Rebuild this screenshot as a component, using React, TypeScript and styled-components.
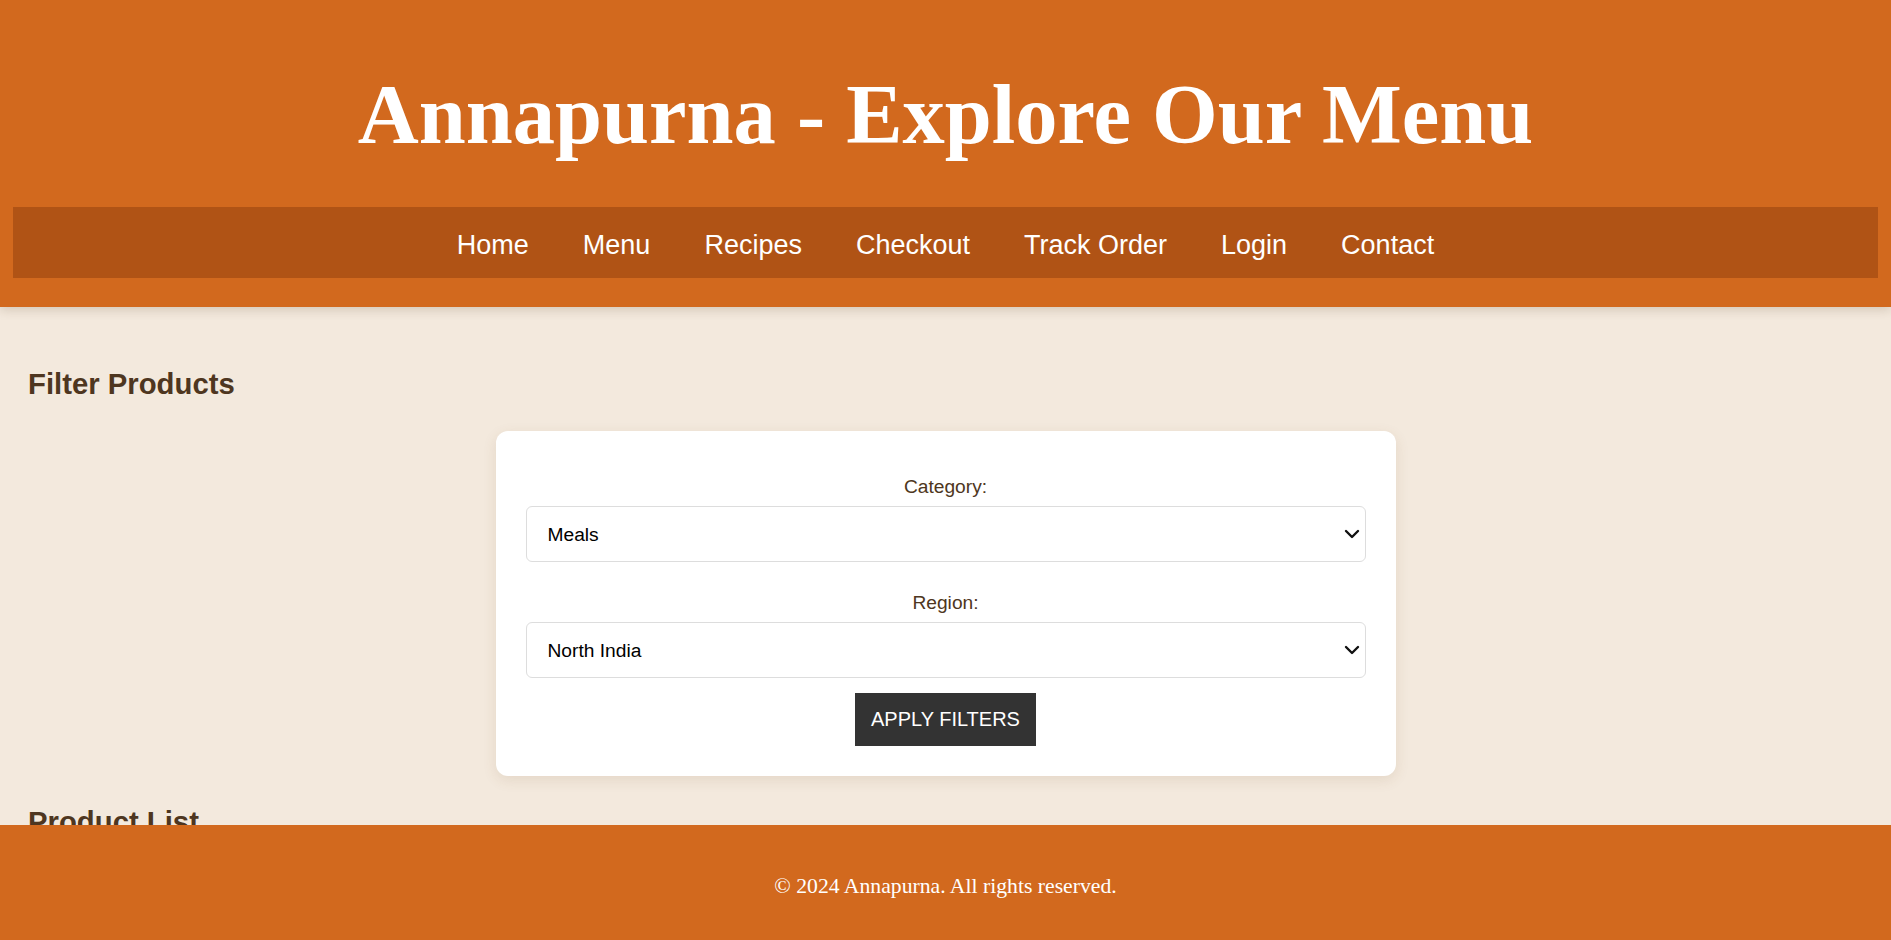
import React from "react";
import styled, { createGlobalStyle } from "styled-components";
import { ChevronDown } from "lucide-react";

const GlobalStyle = createGlobalStyle`
  html, body {
    margin: 0;
    padding: 0;
  }
  body {
    background: #f3e9dd;
    font-family: "Liberation Sans", Arial, sans-serif;
    color: #4e3620;
  }
  * { box-sizing: border-box; }
`;

const Header = styled.header`
  background: #d2691e;
  padding: 74px 13px 29px;
  box-shadow: 0 3px 10px rgba(80, 50, 20, 0.18);
`;

const Title = styled.h1`
  margin: 0 0 51px;
  height: 82px;
  line-height: 82px;
  text-align: center;
  color: #ffffff;
  font-family: "Liberation Serif", Georgia, serif;
  font-weight: 700;
  font-size: 84.5px;
`;

const Nav = styled.nav`
  background: #b05315;
  height: 71px;
  padding-top: 5px;
  display: flex;
  justify-content: center;
  align-items: center;
  gap: 54px;
`;

const NavLink = styled.a`
  color: #ffffff;
  text-decoration: none;
  font-family: "Liberation Sans", Arial, sans-serif;
  font-size: 27px;
`;

const Main = styled.main`
  padding: 60px 28px 140px;
`;

const SectionTitle = styled.h2`
  margin: 0;
  font-size: 29.3px;
  font-weight: 700;
  color: #4e3620;
  font-family: "Liberation Sans", Arial, sans-serif;
`;

const FilterCard = styled.form`
  width: 900px;
  margin: 30px auto 0;
  background: #ffffff;
  border-radius: 12px;
  padding: 45px 30px 30px;
  box-shadow: 0 4px 14px rgba(120, 80, 40, 0.12);
  display: flex;
  flex-direction: column;
  align-items: center;
`;

const FormGroup = styled.div<{ $spacing: number }>`
  width: 100%;
  display: flex;
  flex-direction: column;
  margin-bottom: ${(p) => p.$spacing}px;
`;

const Label = styled.label`
  display: block;
  text-align: center;
  font-size: 19.2px;
  line-height: 22px;
  color: #4e3620;
  margin-bottom: 8px;
`;

const SelectWrap = styled.div`
  position: relative;
  width: 100%;
`;

const Select = styled.select`
  appearance: none;
  -webkit-appearance: none;
  width: 100%;
  height: 56px;
  border: 1px solid #dddddd;
  border-radius: 6px;
  background: #ffffff;
  color: #000000;
  font-family: "Liberation Sans", Arial, sans-serif;
  font-size: 19.2px;
  padding: 0 36px 0 21px;
  display: block;
`;

const Chevron = styled(ChevronDown)`
  position: absolute;
  right: 2px;
  top: 50%;
  transform: translateY(-50%);
  pointer-events: none;
  color: #111111;
`;

const ApplyButton = styled.button`
  height: 53px;
  padding: 0 16px;
  background: #333333;
  color: #ffffff;
  border: none;
  font-family: "Liberation Sans", Arial, sans-serif;
  font-size: 20px;
  text-transform: uppercase;
  cursor: pointer;
`;

const ProductSection = styled.section`
  margin-top: 29px;
`;

const Footer = styled.footer`
  position: fixed;
  left: 0;
  right: 0;
  bottom: 0;
  height: 115px;
  background: #d2691e;
  display: flex;
  align-items: center;
  justify-content: center;
  padding-top: 8px;
`;

const FooterText = styled.p`
  margin: 0;
  color: #ffffff;
  font-family: "Liberation Serif", Georgia, serif;
  font-size: 21.7px;
`;

const links = ["Home", "Menu", "Recipes", "Checkout", "Track Order", "Login", "Contact"];

export default function App() {
  return (
    <>
      <GlobalStyle />
      <Header>
        <Title>Annapurna - Explore Our Menu</Title>
        <Nav>
          {links.map((l) => (
            <NavLink key={l} href="#">
              {l}
            </NavLink>
          ))}
        </Nav>
      </Header>
      <Main>
        <SectionTitle>Filter Products</SectionTitle>
        <FilterCard onSubmit={(e) => e.preventDefault()}>
          <FormGroup $spacing={30}>
            <Label htmlFor="category">Category:</Label>
            <SelectWrap>
              <Select id="category" defaultValue="meals">
                <option value="meals">Meals</option>
                <option value="snacks">Snacks</option>
                <option value="sweets">Sweets</option>
                <option value="beverages">Beverages</option>
              </Select>
              <Chevron size={24} strokeWidth={2.4} />
            </SelectWrap>
          </FormGroup>
          <FormGroup $spacing={15}>
            <Label htmlFor="region">Region:</Label>
            <SelectWrap>
              <Select id="region" defaultValue="north">
                <option value="north">North India</option>
                <option value="south">South India</option>
                <option value="east">East India</option>
                <option value="west">West India</option>
              </Select>
              <Chevron size={24} strokeWidth={2.4} />
            </SelectWrap>
          </FormGroup>
          <ApplyButton type="submit">Apply Filters</ApplyButton>
        </FilterCard>
        <ProductSection>
          <SectionTitle>Product List</SectionTitle>
        </ProductSection>
      </Main>
      <Footer>
        <FooterText>© 2024 Annapurna. All rights reserved.</FooterText>
      </Footer>
    </>
  );
}
